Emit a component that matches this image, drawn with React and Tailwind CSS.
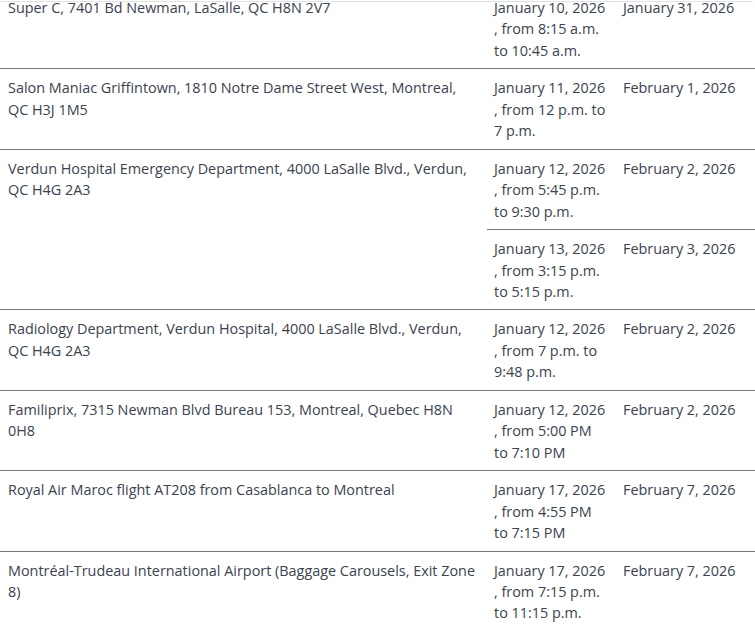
const rows = [
  {
    place: "Super C, 7401 Bd Newman, LaSalle, QC H8N 2V7",
    visits: [
      { when: ["January 10, 2026", ", from 8:15 a.m.", "to 10:45 a.m."], until: "January 31, 2026" },
    ],
  },
  {
    place: "Salon Maniac Griffintown, 1810 Notre Dame Street West, Montreal, QC H3J 1M5",
    visits: [
      { when: ["January 11, 2026", ", from 12 p.m. to", "7 p.m."], until: "February 1, 2026" },
    ],
  },
  {
    place: "Verdun Hospital Emergency Department, 4000 LaSalle Blvd., Verdun, QC H4G 2A3",
    visits: [
      { when: ["January 12, 2026", ", from 5:45 p.m.", "to 9:30 p.m."], until: "February 2, 2026" },
      { when: ["January 13, 2026", ", from 3:15 p.m.", "to 5:15 p.m."], until: "February 3, 2026" },
    ],
  },
  {
    place: "Radiology Department, Verdun Hospital, 4000 LaSalle Blvd., Verdun, QC H4G 2A3",
    visits: [
      { when: ["January 12, 2026", ", from 7 p.m. to", "9:48 p.m."], until: "February 2, 2026" },
    ],
  },
  {
    place: "Familiprix, 7315 Newman Blvd Bureau 153, Montreal, Quebec H8N 0H8",
    visits: [
      { when: ["January 12, 2026", ", from 5:00 PM", "to 7:10 PM"], until: "February 2, 2026" },
    ],
  },
  {
    place: "Royal Air Maroc flight AT208 from Casablanca to Montreal",
    visits: [
      { when: ["January 17, 2026", ", from 4:55 PM", "to 7:15 PM"], until: "February 7, 2026" },
    ],
  },
  {
    place: "Montréal-Trudeau International Airport (Baggage Carousels, Exit Zone 8)",
    visits: [
      { when: ["January 17, 2026", ", from 7:15 p.m.", "to 11:15 p.m."], until: "February 7, 2026" },
    ],
  },
];

function App() {
  return (
    <div
      className="relative h-[625px] w-[755px] overflow-hidden bg-white text-[14.4px] leading-[21.45px] text-[#3b4250]"
      style={{ fontFamily: '"Open Sans", "Noto Sans", sans-serif' }}
    >
      <div className="absolute left-0 top-[1px] h-px w-[753px] bg-[#e2e2e2]" />
      <div className="relative -mt-[11px]">
        {rows.map((row, i) => (
          <div key={i} className="flex border-b border-[#757575]">
            <div className="w-[487px] shrink-0 pb-[7px] pl-2 pr-2 pt-2">{row.place}</div>
            <div className="flex-1">
              {row.visits.map((v, j) => (
                <div
                  key={j}
                  className={`flex ${j < row.visits.length - 1 ? "border-b border-[#757575]" : ""}`}
                >
                  <div className="w-[129px] shrink-0 pb-[7px] pl-[7px] pt-2">
                    {v.when.map((line, k) => (
                      <div key={k}>{line}</div>
                    ))}
                  </div>
                  <div className="flex-1 pb-[7px] pl-[7px] pt-2">{v.until}</div>
                </div>
              ))}
            </div>
          </div>
        ))}
      </div>
    </div>
  );
}

export default App;
